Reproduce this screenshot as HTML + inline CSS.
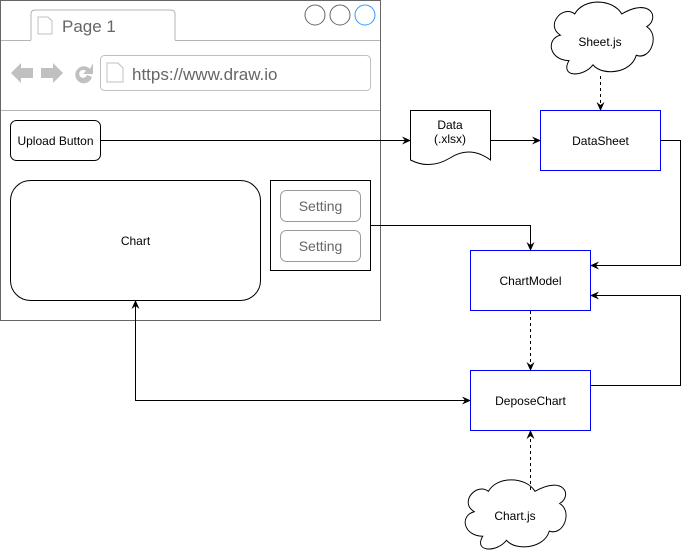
<!DOCTYPE html>
<html><head><meta charset="utf-8"><style>
html,body{margin:0;padding:0;background:#fff;}
svg{display:block;font-family:"Liberation Sans",Arial,sans-serif;}
</style></head><body>
<svg width="689" height="556" viewBox="0 0 689 556" xmlns="http://www.w3.org/2000/svg">
<defs>
<marker id="a" markerWidth="10" markerHeight="10" refX="8" refY="5" orient="auto" markerUnits="userSpaceOnUse">
<path d="M0,1 L9,5 L0,9 L3,5 Z" fill="#000"/></marker>
<marker id="s" markerWidth="10" markerHeight="10" refX="1" refY="5" orient="auto" markerUnits="userSpaceOnUse">
<path d="M9,1 L0,5 L9,9 L6,5 Z" fill="#000"/></marker>
<path id="cloud" d="M25,60 C5,60 0,40 16,36 C0,27 18,7 31,16 C40,1 70,1 80,16 C110,0 120,20 106,28 C120,36 110,60 95,55 C90,72 60,75 50,64 C40,76 15,76 25,60 Z"/>
</defs>
<rect x="0.5" y="0.5" width="380" height="320" fill="#fff" stroke="#666"/>
<path d="M31,40 V14 Q31,10 35,10 H171 Q175,10 175,14 V40" fill="#fff" stroke="#b3b3b3"/>
<line x1="1" y1="40.5" x2="31" y2="40.5" stroke="#b3b3b3"/>
<line x1="175" y1="40.5" x2="380" y2="40.5" stroke="#b3b3b3"/>
<line x1="1" y1="110.5" x2="380" y2="110.5" stroke="#b3b3b3"/>
<path d="M38,17 H48 L52,21 V34 H38 Z" fill="#fff" stroke="#c0c0c0"/>
<text x="62" y="32" font-size="17" fill="#666">Page 1</text>
<circle cx="315" cy="15" r="10" fill="#fff" stroke="#666"/>
<circle cx="340" cy="15" r="10" fill="#fff" stroke="#666"/>
<circle cx="365" cy="15" r="10" fill="#fff" stroke="#3399ff"/>
<path d="M11,73 L21,63 V68 H33 V78 H21 V83 Z" fill="#c0c0c0"/>
<path d="M63,73 L53,63 V68 H41 V78 H53 V83 Z" fill="#c0c0c0"/>
<path d="M90,69 A8.5,8.5 0 1,0 92,77 L87,75 A4,4 0 1,1 86,71 L83,74 H93 V63 Z" fill="#c0c0c0"/>
<rect x="100.5" y="55.5" width="270" height="35" rx="4" fill="#fff" stroke="#c0c0c0"/>
<path d="M107,63 H118 L123,68 V82 H107 Z" fill="#fff" stroke="#c0c0c0"/>
<text x="132" y="80" font-size="17" fill="#666">https://www.draw.io</text>
<rect x="10.5" y="120.5" width="90" height="40" rx="6" fill="#fff" stroke="#000"/>
<text x="55.5" y="145" font-size="12" text-anchor="middle">Upload Button</text>
<rect x="10.5" y="180.5" width="250" height="120" rx="20" fill="#fff" stroke="#000"/>
<text x="135.5" y="245" font-size="12" text-anchor="middle">Chart</text>
<rect x="270.5" y="180.5" width="100" height="90" fill="#fff" stroke="#000"/>
<rect x="280.5" y="190.5" width="80" height="31" rx="6" fill="#fff" stroke="#999"/>
<text x="320.5" y="211" font-size="14" fill="#666" text-anchor="middle">Setting</text>
<rect x="280.5" y="230.5" width="80" height="31" rx="6" fill="#fff" stroke="#999"/>
<text x="320.5" y="251" font-size="14" fill="#666" text-anchor="middle">Setting</text>
<path d="M410.5,110.5 H490.5 V160 Q470,145 450,158 Q430,170 410.5,160 Z" fill="#fff" stroke="#000"/>
<text x="450" y="129" font-size="12" text-anchor="middle">Data</text>
<text x="450" y="143" font-size="12" text-anchor="middle">(.xlsx)</text>
<rect x="540.5" y="110.5" width="120" height="60" fill="#fff" stroke="#0000ff"/>
<text x="600.5" y="145" font-size="12" text-anchor="middle">DataSheet</text>
<rect x="470.5" y="250.5" width="120" height="60" fill="#fff" stroke="#0000ff"/>
<text x="530.5" y="285" font-size="12" text-anchor="middle">ChartModel</text>
<rect x="470.5" y="370.5" width="120" height="60" fill="#fff" stroke="#0000ff"/>
<text x="530.5" y="405" font-size="12" text-anchor="middle">DeposeChart</text>
<use href="#cloud" transform="translate(545,-3) scale(0.96,1.06)" fill="#fff" stroke="#000" stroke-width="1"/>
<text x="600" y="46" font-size="12" text-anchor="middle">Sheet.js</text>
<use href="#cloud" transform="translate(459,475) scale(0.95,1.02)" fill="#fff" stroke="#000" stroke-width="1"/>
<text x="515" y="520" font-size="12" text-anchor="middle">Chart.js</text>
<g fill="none" stroke="#000">
<path d="M100.5,140.5 H410" marker-end="url(#a)"/>
<path d="M490.5,140.5 H540" marker-end="url(#a)"/>
<path d="M660.5,140.5 H680.5 V265.5 H591" marker-end="url(#a)"/>
<path d="M370.5,225.5 H530.5 V250" marker-end="url(#a)"/>
<path d="M590.5,385.5 H680.5 V295.5 H591" marker-end="url(#a)"/>
<path d="M135.5,301 V400.5 H470" marker-start="url(#s)" marker-end="url(#a)"/>
<path d="M600.5,76 V110" stroke-dasharray="3,3" marker-end="url(#a)"/>
<path d="M530.5,311 V370" stroke-dasharray="3,3" marker-end="url(#a)"/>
<path d="M530.5,490 V431" stroke-dasharray="3,3" marker-end="url(#a)"/>
</g>
</svg>
</body></html>
